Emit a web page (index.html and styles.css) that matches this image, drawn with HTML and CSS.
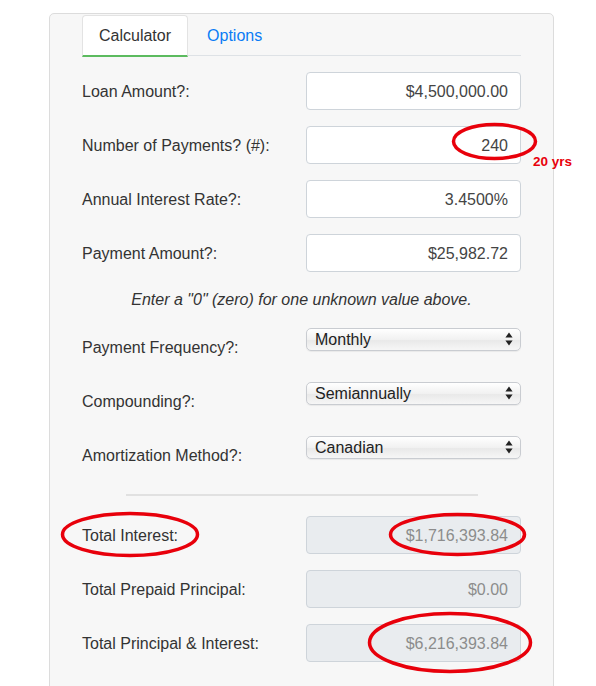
FILE: index.html
```html
<!DOCTYPE html>
<html>
<head>
<meta charset="utf-8">
<link rel="stylesheet" href="styles.css">
</head>
<body>
<div class="panel">
  <ul class="tabs">
    <li class="tab active">Calculator</li>
    <li class="tab link">Options</li>
  </ul>
  <form class="form">
    <div class="row"><label class="lbl">Loan Amount?:</label><input class="inp" type="text" value="$4,500,000.00"></div>
    <div class="row"><label class="lbl">Number of Payments? (#):</label><input class="inp" type="text" value="240"></div>
    <div class="row"><label class="lbl">Annual Interest Rate?:</label><input class="inp" type="text" value="3.4500%"></div>
    <div class="row"><label class="lbl">Payment Amount?:</label><input class="inp" type="text" value="$25,982.72"></div>
    <p class="note">Enter a "0" (zero) for one unknown value above.</p>
    <div class="row top"><label class="lbl">Payment Frequency?:</label>
      <div class="selwrap"><select class="sel"><option>Monthly</option></select>
        <svg class="arrows" width="8" height="14" viewBox="0 0 8 14"><path d="M4 0.5 L7.6 5.6 L0.4 5.6 Z M4 13.5 L7.6 8.4 L0.4 8.4 Z" fill="#222"/></svg></div></div>
    <div class="row top"><label class="lbl">Compounding?:</label>
      <div class="selwrap"><select class="sel"><option>Semiannually</option></select>
        <svg class="arrows" width="8" height="14" viewBox="0 0 8 14"><path d="M4 0.5 L7.6 5.6 L0.4 5.6 Z M4 13.5 L7.6 8.4 L0.4 8.4 Z" fill="#222"/></svg></div></div>
    <div class="row top"><label class="lbl">Amortization Method?:</label>
      <div class="selwrap"><select class="sel"><option>Canadian</option></select>
        <svg class="arrows" width="8" height="14" viewBox="0 0 8 14"><path d="M4 0.5 L7.6 5.6 L0.4 5.6 Z M4 13.5 L7.6 8.4 L0.4 8.4 Z" fill="#222"/></svg></div></div>
    <hr class="sep">
    <div class="row"><label class="lbl">Total Interest:</label><input class="inp dis" type="text" value="$1,716,393.84" disabled></div>
    <div class="row"><label class="lbl">Total Prepaid Principal:</label><input class="inp dis" type="text" value="$0.00" disabled></div>
    <div class="row"><label class="lbl">Total Principal &amp; Interest:</label><input class="inp dis" type="text" value="$6,216,393.84" disabled></div>
  </form>
</div>
<svg class="marks" width="596" height="686" viewBox="0 0 596 686">
  <g fill="none" stroke="#e8000b" stroke-width="3.5">
    <ellipse cx="494.5" cy="141.5" rx="41" ry="17"/>
    <ellipse cx="130" cy="534.5" rx="67.5" ry="21"/>
    <ellipse cx="457.5" cy="534.5" rx="67" ry="20"/>
    <ellipse cx="450" cy="642.5" rx="80.5" ry="29"/>
  </g>
</svg>
<div class="yrs">20 yrs</div>
</body>
</html>
```
FILE: styles.css
```css
html, body {
  margin: 0;
  padding: 0;
  background: #fff;
  font-family: "Liberation Sans", Arial, sans-serif;
  font-size: 16px;
  color: #333;
  overflow: hidden;
}
.panel {
  margin: 13px 0 0 49px;
  width: 439px;
  padding: 1px 32px 40px 32px;
  background: #f7f7f7;
  border: 1px solid #dcdcdc;
  border-radius: 5px;
  min-height: 700px;
}
.tabs {
  list-style: none;
  margin: 0;
  padding: 0;
  display: flex;
  gap: 2px;
  border-bottom: 1px solid #dee2e6;
  height: 40px;
}
.tab {
  padding: 8px 16px 8px 16px;
  line-height: 24px;
  height: 24px;
  border: 1px solid transparent;
  border-bottom: 0;
  border-radius: 4px 4px 0 0;
}
.tab.active {
  background: #fff;
  border-color: #e3e3e3;
  border-bottom: 2px solid #5cbb5f;
  height: 23px;
  padding-bottom: 8px;
  color: #333;
}
.tab.link {
  color: #0a7cf5;
}
.form {
  margin: 16px 0 0 0;
}
.row {
  display: flex;
  align-items: center;
  height: 38px;
  margin-bottom: 16px;
}
.row.top {
  align-items: flex-start;
}
.lbl {
  width: 224px;
  flex: none;
  line-height: 24px;
  padding-top: 2px;
  color: #333;
}
.row.top .lbl {
  padding-top: 8px;
}
.inp {
  box-sizing: border-box;
  width: 215px;
  height: 38px;
  padding: 7px 12px 5px 12px;
  border: 1px solid #ced4da;
  border-radius: 4px;
  background: #fff;
  font-family: "Liberation Sans", Arial, sans-serif;
  font-size: 16px;
  color: #444;
  text-align: right;
  outline: none;
}
.inp.dis {
  background: #e9ecef;
  color: #8c8c8c;
  -webkit-text-fill-color: #8c8c8c;
  opacity: 1;
}
.note {
  margin: 0 0 16px 0;
  line-height: 24px;
  text-align: center;
  font-style: italic;
  color: #333;
}
.selwrap {
  position: relative;
  width: 215px;
  height: 23px;
}
.sel {
  -webkit-appearance: none;
  appearance: none;
  box-sizing: border-box;
  width: 215px;
  height: 23px;
  margin: 0;
  padding: 0 24px 0 8px;
  border: 1px solid #c9ccd1;
  border-radius: 5px;
  background: linear-gradient(#ffffff, #f1f1f1 50%, #e9e9e9 55%, #f6f6f6);
  font-family: "Liberation Sans", Arial, sans-serif;
  font-size: 16px;
  line-height: 21px;
  color: #222;
  box-shadow: 0 1px 1px rgba(0,0,0,0.06);
}
.arrows {
  position: absolute;
  right: 8px;
  top: 4px;
  pointer-events: none;
}
.sep {
  width: 352px;
  margin: 20px auto 20px auto;
  border: 0;
  height: 2px;
  background: #e1e1e1;
}
.marks {
  position: absolute;
  left: 0;
  top: 0;
  pointer-events: none;
}
.yrs {
  position: absolute;
  left: 533px;
  top: 154px;
  font-weight: bold;
  font-size: 13.5px;
  line-height: 16px;
  color: #e8000b;
}
```
